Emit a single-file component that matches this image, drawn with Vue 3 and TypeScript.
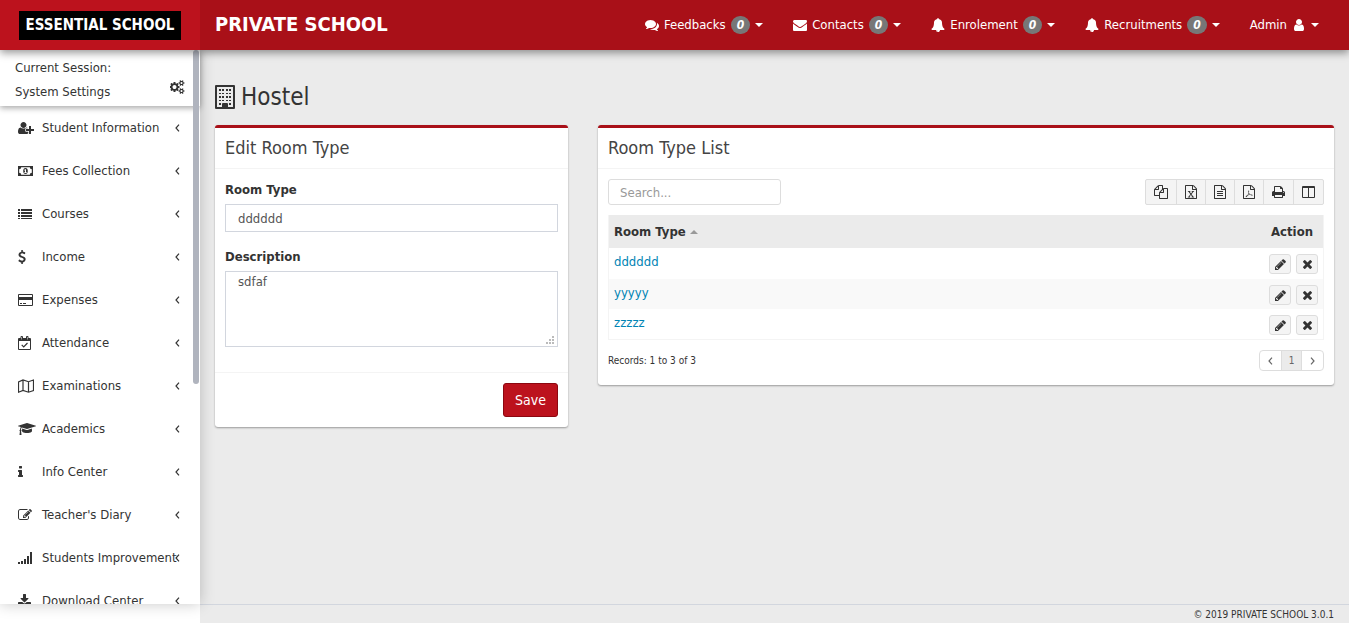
<script setup lang="ts">
import { ref } from 'vue'

interface Icon { box: string; w: number; h: number; d: string; line?: string }

const page = 'M1596 380q28 28 48 76t20 88v1152q0 40-28 68t-68 28h-1344q-40 0-68-28t-28-68v-1600q0-40 28-68t68-28h896q40 0 88 20t76 48zm-444-244v376h376q-10-29-22-41l-313-313q-12-12-41-22zm384 1528v-1024h-416q-40 0-68-28t-28-68v-416h-768v1536h1280z'

const icons: Record<string, Icon> = {
  comments: { box: '0 0 1792 1792', w: 14, h: 14, d: 'M1408 768q0 139-94 257t-256.500 186.500-353.500 68.500q-86 0-176-16-124 88-278 128-36 9-86 16h-3q-11 0-20.500-8t-11.500-21q-1-3-1-6.500t.5-6.500 2-6l2.500-5 3.500-5.500 4-5 4.500-5 4-4.500q5-6 23-25t26-29.500 22.500-29 25-38.500 20.500-44q-124-72-195-177t-71-224q0-139 94-257t256.500-186.500 353.500-68.500 353.500 68.500 256.500 186.500 94 257zm384 256q0 120-71 224.500t-195 176.500q10 24 20.500 44t25 38.500 22.500 29 26 29.500 23 25q1 1 4 4.500t4.500 5 4 5 3.500 5.500l2.500 5 2 6 .5 6.500-1 6.500q-3 14-13 22t-22 7q-50-7-86-16-154-40-278-128-90 16-176 16-271 0-472-132 58 4 88 4 161 0 309-45t264-129q125-92 192-212t67-254q0-77-23-152 129 71 204 178t75 230z' },
  envelope: { box: '0 0 1792 1792', w: 14, h: 14, d: 'M1792 710v794q0 66-47 113t-113 47h-1472q-66 0-113-47t-47-113v-794q44 49 101 87 362 246 497 345 57 42 92.500 65.500t94.500 48 110 24.500h2q51 0 110-24.500t94.500-48 92.500-65.500q170-123 498-345 57-39 100-87zm0-294q0 79-49 151t-122 123q-376 261-468 325-10 7-42.500 31t-54 38.500-52 32.500-57.500 27-50 9h-2q-23 0-50-9t-57.500-27-52-32.500-54-38.500-42.500-31q-91-64-262-182.500t-205-142.500q-62-42-117-115.500t-55-136.500q0-78 41.500-130t118.500-52h1472q65 0 112.500 47t47.500 113z' },
  bell: { box: '0 0 1792 1792', w: 14, h: 14, d: 'M912 1696q0-16-16-16-59 0-101.500-42.500t-42.500-101.500q0-16-16-16t-16 16q0 73 51.500 124.500t124.500 51.500q16 0 16-16zm816-288q0 52-38 90t-90 38h-448q0 106-75 181t-181 75-181-75-75-181h-448q-52 0-90-38t-38-90q50-42 91-88t85-119.500 74.500-158.500 50-206 19.500-260q0-152 117-282.500t307-158.500q-8-19-8-39 0-40 28-68t68-28 68 28 28 68q0 20-8 39 190 28 307 158.500t117 282.500q0 139 19.500 260t50 206 74.500 158.500 85 119.500 91 88z' },
  user: { box: '256 0 1280 1792', w: 10, h: 14, d: 'M1536 1399q0 109-62.500 187t-150.500 78h-854q-88 0-150.500-78t-62.500-187q0-85 8.500-160.500t31.500-152 58.500-131 94-89 134.500-34.500q131 128 313 128t313-128q76 0 134.500 34.500t94 89 58.500 131 31.500 152 8.500 160.500zm-256-887q0 159-112.500 271.500t-271.500 112.500-271.500-112.500-112.500-271.500 112.500-271.500 271.500-112.500 271.500 112.500 112.500 271.500z' },
  cogs: { box: '0 0 1920 1792', w: 15, h: 14, d: 'M832 896q0-106-75-181t-181-75-181 75-75 181 75 181 181 75 181-75 75-181zm768 512q0-52-38-90t-90-38-90 38-38 90q0 53 37.500 90.500t90.500 37.500 90.500-37.500 37.500-90.500zm0-1024q0-52-38-90t-90-38-90 38-38 90q0 53 37.500 90.500t90.500 37.500 90.500-37.500 37.500-90.500zm-384 421v185q0 10-7 19.500t-16 10.500l-155 24q-11 35-32 76 34 48 90 115 7 11 7 20 0 12-7 19-23 30-82.500 89.500t-78.500 59.500q-11 0-21-7l-115-90q-37 19-77 31-11 108-23 155-7 24-30 24h-186q-11 0-20-7.500t-10-17.500l-23-153q-34-10-75-31l-118 89q-7 7-20 7-11 0-21-8-144-133-144-160 0-9 7-19 10-14 41-53t47-61q-23-44-35-82l-152-24q-10-1-17-9.500t-7-19.500v-185q0-10 7-19.500t16-10.500l155-24q11-35 32-76-34-48-90-115-7-11-7-20 0-12 7-20 22-30 82-89t79-59q11 0 21 7l115 90q34-18 77-32 11-108 23-154 7-24 30-24h186q11 0 20 7.500t10 17.500l23 153q34 10 75 31l118-89q8-7 20-7 11 0 21 8 144 133 144 160 0 9-7 19-12 16-42 54t-45 60q23 48 34 82l152 23q10 2 17 10.500t7 19.500zm640 533v140q0 16-149 31-12 27-30 52 51 113 51 138 0 4-4 7-122 71-124 71-8 0-46-47t-52-68q-20 2-30 2t-30-2q-14 21-52 68t-46 47q-2 0-124-71-4-3-4-7 0-25 51-138-18-25-30-52-149-15-149-31v-140q0-16 149-31 13-29 30-52-51-113-51-138 0-4 4-7 4-2 35-20t59-34 30-16q8 0 46 46.500t52 67.500q20-2 30-2t30 2q51-71 92-112l6-2q4 0 124 70 4 3 4 7 0 25-51 138 17 23 30 52 149 15 149 31zm0-1024v140q0 16-149 31-12 27-30 52 51 113 51 138 0 4-4 7-122 71-124 71-8 0-46-47t-52-68q-20 2-30 2t-30-2q-14 21-52 68t-46 47q-2 0-124-71-4-3-4-7 0-25 51-138-18-25-30-52-149-15-149-31v-140q0-16 149-31 13-29 30-52-51-113-51-138 0-4 4-7 4-2 35-20t59-34 30-16q8 0 46 46.500t52 67.500q20-2 30-2t30 2q51-71 92-112l6-2q4 0 124 70 4 3 4 7 0 25-51 138 17 23 30 52 149 15 149 31z' },
  userPlus: { box: '0 0 2048 1792', w: 16, h: 14, d: 'M704 896q-159 0-271.500-112.500t-112.500-271.500 112.500-271.500 271.500-112.500 271.500 112.500 112.500 271.500-112.500 271.500-271.500 112.500zm960 128h352q13 0 22.500 9.500t9.500 22.500v192q0 13-9.500 22.500t-22.500 9.500h-352v352q0 13-9.500 22.500t-22.500 9.500h-192q-13 0-22.500-9.500t-9.500-22.500v-352h-352q-13 0-22.500-9.500t-9.500-22.500v-192q0-13 9.500-22.500t22.500-9.500h352v-352q0-13 9.500-22.500t22.500-9.500h192q13 0 22.500 9.500t9.500 22.500v352zm-736 224q0 52 38 90t90 38h256v238q-68 50-171 50h-874q-121 0-194-69t-73-190q0-53 3.500-103.500t14-109 26.500-108.500 43-97.500 62-81 85.500-53.500 111.500-20q19 0 39 17 79 61 154.500 91.500t164.500 30.500 164.500-30.500 154.500-91.500q20-17 39-17 132 0 217 96h-223q-52 0-90 38t-38 90v192z' },
  money: { box: '0 0 15 14', w: 15, h: 14, d: 'M0 2h15v10H0zM3.200 3.300a2 2 0 0 1-2 2v3.400a2 2 0 0 1 2 2h8.600a2 2 0 0 1 2-2V5.300a2 2 0 0 1-2-2zM7.500 4a2.300 3 0 1 1 0 6 2.300 3 0 1 1 0-6zM7 5.200l-.8.8v.6H7v1.600h-.8V9h2.600v-.8H8v-3z' },
  list: { box: '0 0 14 14', w: 14, h: 14, d: 'M0 2h2v2H0zM3 2h11v2H3zM0 5h2v2H0zM3 5h11v2H3zM0 8h2v2H0zM3 8h11v2H3zM0 11h2v1H0zM3 11h11v1H3z' },
  dollar: { box: '384 0 1024 1792', w: 8, h: 14, d: 'M1362 1185q0 153-99.500 263.500t-258.500 136.500v175q0 14-9 23t-23 9h-135q-13 0-22.500-9.500t-9.500-22.500v-175q-66-9-127.500-31t-101.500-44.500-74-48-46.500-37.500-17.500-18q-17-21-2-41l103-135q7-10 23-12 15-2 24 9l2 2q113 99 243 125 37 8 74 8 81 0 142.500-43t61.500-122q0-28-15-53t-33.500-42-58.500-37.500-66-32-80-32.500q-39-16-61.500-25t-61.500-26.500-62.500-31-56.500-35.500-53.500-42.500-43.500-49-35.500-58-21-66.500-8.500-78q0-138 98-242t255-134v-180q0-13 9.500-22.500t22.500-9.500h135q14 0 23 9t9 23v176q57 6 110.500 23t87 33.500 63.500 37.500 39 29 15 14q17 18 5 38l-81 146q-8 15-23 16-14 3-27-7-3-3-14.500-12t-39-26.500-58.500-32-74.500-26-85.500-11.500q-95 0-155 43t-60 111q0 26 8.500 48t29.500 41.500 39.500 33 56 31 60.500 27 70 27.500q53 20 81 31.500t76 35 75.500 42.500 62 50 53 63.500 31.500 76.500 13 94z' },
  card: { box: '0 0 15 14', w: 15, h: 14, d: 'M1 1h13q1 0 1 1v10q0 1-1 1H1q-1 0-1-1V2q0-1 1-1zM1 2v2h13V2zM1 7v5h13V7zM2 10h2v1H2zM5 10h3v1H5z' },
  calendar: { box: '0 0 13 14', w: 13, h: 14, d: 'M1 2h1.500V1q0-1 1-1h.500q1 0 1 1v1h3V1q0-1 1-1h.500q1 0 1 1v1H12q1 0 1 1v10q0 1-1 1H1q-1 0-1-1V3q0-1 1-1zM1 5v8h11V5zM3.500 1v2.500h.500V1zM9 1v2.500h.500V1z', line: 'M3.700 8.800l2 2L9.500 7' },
  map: { box: '0 0 16 14', w: 16, h: 14, d: '', line: 'M.5 3v10.200L5 11.500l5.500 1.700 5-1.700V1l-5 1.700L5 1zM5 1v10.500M10.500 2.700v10.500' },
  cap: { box: '0 0 2304 1792', w: 18, h: 14, d: 'M1774 836l18 316q4 69-82 128t-235 93.500-323 34.500-323-34.500-235-93.500-82-128l18-316 574 181q22 7 48 7t48-7zm530-324q0 23-22 31l-1120 352q-4 1-10 1t-10-1l-652-206q-43 34-71 111.500t-34 178.500q63 36 63 109 0 69-58 107l58 433q2 14-8 25-9 11-24 11h-192q-15 0-24-11-10-11-8-25l58-433q-58-38-58-107 0-73 65-111 11-207 98-330l-333-104q-22-8-22-31t22-31l1120-352q4-1 10-1t10 1l1120 352q22 8 22 31z' },
  info: { box: '576 0 640 1792', w: 5, h: 14, d: 'M1216 1344v128q0 26-19 45t-45 19h-512q-26 0-45-19t-19-45v-128q0-26 19-45t45-19h64v-384h-64q-26 0-45-19t-19-45v-128q0-26 19-45t45-19h384q26 0 45 19t19 45v576h64q26 0 45 19t19 45zm-128-1152v192q0 26-19 45t-45 19h-256q-26 0-45-19t-19-45v-192q0-26 19-45t45-19h256q26 0 45 19t19 45z' },
  compose: { box: '0 0 1792 1792', w: 14, h: 14, d: 'M888 1184l116-116-152-152-116 116v56h96v96h56zm440-720q-16-16-33 1l-350 350q-17 17-1 33t33-1l350-350q17-17 1-33zm80 594v190q0 119-84.500 203.500t-203.500 84.500h-832q-119 0-203.500-84.500t-84.500-203.500v-832q0-119 84.500-203.500t203.500-84.500h832q63 0 117 25 15 7 18 23 3 17-9 29l-49 49q-14 14-32 8-23-6-45-6h-832q-66 0-113 47t-47 113v832q0 66 47 113t113 47h832q66 0 113-47t47-113v-126q0-13 9-22l64-64q15-15 35-7t20 29zm-96-738l288 288-672 672h-288v-288zm444 132l-92 92-288-288 92-92q28-28 68-28t68 28l152 152q28 28 28 68t-28 68z' },
  signal: { box: '0 0 14 14', w: 14, h: 14, d: 'M0 11h2v2H0zM3 10h2v3H3zM6 8h2v5H6zM9 5h2v8H9zM12 1h2v12h-2z' },
  download: { box: '64 0 1664 1792', w: 13, h: 14, d: 'M1344 1344q0-26-19-45t-45-19-45 19-19 45 19 45 45 19 45-19 19-45zm256 0q0-26-19-45t-45-19-45 19-19 45 19 45 45 19 45-19 19-45zm128-224v320q0 40-28 68t-68 28h-1472q-40 0-68-28t-28-68v-320q0-40 28-68t68-28h465l135 136q58 56 136 56t136-56l136-136h464q40 0 68 28t28 68zm-325-569q17 41-14 70l-448 448q-18 19-45 19t-45-19l-448-448q-31-29-14-70 17-39 59-39h256v-448q0-26 19-45t45-19h256q26 0 45 19t19 45v448h256q42 0 59 39z' },
  building: { box: '0 0 20 24', w: 20, h: 24, d: 'M1 0h18q1 0 1 1v22q0 1-1 1H1q-1 0-1-1V1q0-1 1-1zM2 2v20h5v-3q0-1 1-1h4q1 0 1 1v3h5V2zM4 4h2v2H4zM7 4h2v2H7zM11 4h2v2h-2zM14 4h2v2h-2zM4 8h2v1H4zM7 8h2v1H7zM11 8h2v1h-2zM14 8h2v1h-2zM4 11h2v2H4zM7 11h2v2H7zM11 11h2v2h-2zM14 11h2v2h-2zM4 15h2v1H4zM7 15h2v1H7zM11 15h2v1h-2zM14 15h2v1h-2zM4 18h2v2H4zM14 18h2v2h-2z' },
  copy: { box: '0 0 1792 1792', w: 14, h: 14, d: 'M1696 384q40 0 68 28t28 68v1216q0 40-28 68t-68 28h-960q-40 0-68-28t-28-68v-288h-544q-40 0-68-28t-28-68v-672q0-40 20-88t48-76l408-408q28-28 76-48t88-20h416q40 0 68 28t28 68v328q68-40 128-40h416zm-544 213l-299 299h299v-299zm-640-384l-299 299h299v-299zm196 647l316-316v-416h-384v416q0 40-28 68t-68 28h-416v640h512v-256q0-40 20-88t48-76zm956 804v-1152h-384v416q0 40-28 68t-68 28h-416v640h896z' },
  excel: { box: '128 0 1536 1792', w: 12, h: 14, d: page + 'M500 768h320v110h-80l160 220 160-220h-80v-110h310v110h-90l-230 300 240 310h80v110H970v-110h70l-160-230-160 230h80v110H490v-110h80l240-310-230-300h-80z' },
  text: { box: '128 0 1536 1792', w: 12, h: 14, d: page + 'M512 768h768v128H512zM512 1024h768v128H512zM512 1280h768v128H512z' },
  pdf: { box: '128 0 1536 1792', w: 12, h: 14, d: page + 'M800 720q90-40 110 60 10 80-25 210 70 150 190 220 260-20 300 60 20 110-130 80-110-30-210-90-150 20-290 75-150 250-240 230-120-50 60-200 60-40 150-80 80-150 125-290-60-210-40-275zM875 1090q-35 90-75 165 90-30 175-45-60-50-100-120z' },
  print: { box: '64 0 1664 1792', w: 13, h: 14, d: 'M448 1536h896v-256h-896v256zm0-640h896v-384h-160q-40 0-68-28t-28-68v-160h-640v640zm1152 64q0-26-19-45t-45-19-45 19-19 45 19 45 45 19 45-19 19-45zm128 0v416q0 13-9.500 22.500t-22.500 9.500h-224v160q0 40-28 68t-68 28h-960q-40 0-68-28t-28-68v-160h-224q-13 0-22.500-9.500t-9.500-22.500v-416q0-79 56.500-135.500t135.500-56.500h64v-544q0-40 28-68t68-28h672q40 0 88 20t76 48l152 152q28 28 48 76t20 88v256h64q79 0 135.500 56.500t56.500 135.500z' },
  columns: { box: '0 0 13 14', w: 13, h: 14, d: 'M1 1h11q1 0 1 1v10q0 1-1 1H1q-1 0-1-1V2q0-1 1-1zM1 3v9h5V3zM7 3v9h5V3z' },
  pencil: { box: '128 128 1536 1536', w: 11, h: 11, d: 'M491 1536l91-91-235-235-91 91v107h128v128h107zm523-928q0-22-22-22-10 0-17 7l-542 542q-7 7-7 17 0 22 22 22 10 0 17-7l542-542q7-7 7-17zm-54-192l416 416-832 832h-416v-416zm683 96q0 53-37 90l-166 166-416-416 166-165q36-38 90-38 53 0 91 38l235 234q37 39 37 91z' },
  remove: { box: '302 366 1188 1188', w: 9, h: 9, d: 'M1490 1322q0 40-28 68l-136 136q-28 28-68 28t-68-28l-294-294-294 294q-28 28-68 28t-68-28l-136-136q-28-28-28-68t28-68l294-294-294-294q-28-28-28-68t28-68l136-136q28-28 68-28t68 28l294 294 294-294q28-28 68-28t68 28l136 136q28 28 28 68t-28 68l-294 294 294 294q28 28 28 68z' },
  left: { box: '0 0 5 8', w: 5, h: 8, d: '', line: 'M4 .7L1 4l3 3.300' },
  right: { box: '0 0 5 8', w: 5, h: 8, d: '', line: 'M1 .7L4 4 1 7.300' },
}

const notices = [
  { icon: 'comments', label: 'Feedbacks', count: 0 },
  { icon: 'envelope', label: 'Contacts', count: 0 },
  { icon: 'bell', label: 'Enrolement', count: 0 },
  { icon: 'bell', label: 'Recruitments', count: 0 },
]

const menu = [
  { icon: 'userPlus', label: 'Student Information' },
  { icon: 'money', label: 'Fees Collection' },
  { icon: 'list', label: 'Courses' },
  { icon: 'dollar', label: 'Income' },
  { icon: 'card', label: 'Expenses' },
  { icon: 'calendar', label: 'Attendance' },
  { icon: 'map', label: 'Examinations' },
  { icon: 'cap', label: 'Academics' },
  { icon: 'info', label: 'Info Center' },
  { icon: 'compose', label: "Teacher's Diary" },
  { icon: 'signal', label: 'Students Improvement' },
  { icon: 'download', label: 'Download Center' },
]

const tools = [
  { icon: 'copy', label: 'Copy' },
  { icon: 'excel', label: 'Excel' },
  { icon: 'text', label: 'CSV' },
  { icon: 'pdf', label: 'PDF' },
  { icon: 'print', label: 'Print' },
  { icon: 'columns', label: 'Columns' },
]

const rooms = ['dddddd', 'yyyyy', 'zzzzz']
const roomType = ref('dddddd')
const description = ref('sdfaf')
const search = ref('')
</script>

<template>
  <div class="app">
    <svg class="defs" aria-hidden="true">
      <symbol v-for="(icon, name) in icons" :id="'i-' + name" :key="name" :viewBox="icon.box">
        <path v-if="icon.d" :d="icon.d" fill="currentColor" fill-rule="evenodd" />
        <path v-if="icon.line" :d="icon.line" fill="none" stroke="currentColor" stroke-width="1.2" />
      </symbol>
    </svg>

    <header class="topbar">
      <a class="brand" href="#"><span class="logo">ESSENTIAL SCHOOL</span></a>
      <div class="bar">
        <span class="school">PRIVATE SCHOOL</span>
        <nav class="notices">
          <a v-for="n in notices" :key="n.label" class="notice" href="#">
            <svg :width="icons[n.icon].w" :height="icons[n.icon].h"><use :href="'#i-' + n.icon" /></svg>
            <span>{{ n.label }}</span>
            <em class="count">{{ n.count }}</em>
            <span class="caret"></span>
          </a>
          <a class="notice account" href="#">
            <span>Admin</span>
            <svg width="10" height="14"><use href="#i-user" /></svg>
            <span class="caret"></span>
          </a>
        </nav>
      </div>
    </header>

    <div class="layout">
      <aside class="sidebar">
        <div class="session">
          <div>Current Session:</div>
          <div class="settings">
            <a href="#">System Settings</a>
            <a href="#" aria-label="Settings"><svg width="15" height="14"><use href="#i-cogs" /></svg></a>
          </div>
        </div>
        <div class="menu-wrap">
          <ul class="menu">
            <li v-for="m in menu" :key="m.label">
              <a href="#">
                <span class="menu-icon"><svg :width="icons[m.icon].w" :height="icons[m.icon].h"><use :href="'#i-' + m.icon" /></svg></span>
                <span class="menu-label">{{ m.label }}</span>
                <svg width="5" height="8"><use href="#i-left" /></svg>
              </a>
            </li>
          </ul>
        </div>
        <div class="thumb"></div>
      </aside>

      <div class="main">
        <main class="content">
          <h1><svg width="20" height="24"><use href="#i-building" /></svg>Hostel</h1>
          <div class="columns">
            <div class="column">
              <form class="panel" @submit.prevent>
                <h2>Edit Room Type</h2>
                <div class="form-body">
                  <div class="field">
                    <label for="room-type">Room Type</label>
                    <input id="room-type" v-model="roomType" type="text" />
                  </div>
                  <div class="field">
                    <label for="description">Description</label>
                    <div class="area">
                      <textarea id="description" v-model="description"></textarea>
                      <svg class="grip" width="8" height="8" aria-hidden="true"><path d="M6 0h2v2H6zM3 3h2v2H3zM6 3h2v2H6zM0 6h2v2H0zM3 6h2v2H3zM6 6h2v2H6z" fill="#bbb" /></svg>
                    </div>
                  </div>
                </div>
                <div class="form-foot"><button class="save" type="submit">Save</button></div>
              </form>
            </div>

            <div class="column">
              <section class="panel">
                <h2>Room Type List</h2>
                <div class="list-body">
                  <div class="toolbar">
                    <input v-model="search" class="search" type="search" placeholder="Search..." aria-label="Search" />
                    <div class="tools">
                      <button v-for="t in tools" :key="t.label" type="button" :aria-label="t.label">
                        <svg :width="icons[t.icon].w" :height="icons[t.icon].h"><use :href="'#i-' + t.icon" /></svg>
                      </button>
                    </div>
                  </div>
                  <table>
                    <thead>
                      <tr><th>Room Type <span class="sort"></span></th><th class="right">Action</th></tr>
                    </thead>
                    <tbody>
                      <tr v-for="r in rooms" :key="r">
                        <td><a href="#">{{ r }}</a></td>
                        <td>
                          <div class="actions">
                            <button type="button" aria-label="Edit"><svg width="11" height="11"><use href="#i-pencil" /></svg></button>
                            <button type="button" aria-label="Delete"><svg width="9" height="9"><use href="#i-remove" /></svg></button>
                          </div>
                        </td>
                      </tr>
                    </tbody>
                  </table>
                  <div class="summary">
                    <span>Records: 1 to 3 of 3</span>
                    <div class="pager">
                      <button type="button" aria-label="Previous"><svg width="5" height="8"><use href="#i-left" /></svg></button>
                      <button type="button" class="current">1</button>
                      <button type="button" aria-label="Next"><svg width="5" height="8"><use href="#i-right" /></svg></button>
                    </div>
                  </div>
                </div>
              </section>
            </div>
          </div>
        </main>
        <footer>© 2019 PRIVATE SCHOOL 3.0.1</footer>
      </div>
    </div>
  </div>
</template>

<style>
body { margin: 0; background: #fff; }
</style>

<style scoped>
* { box-sizing: border-box; }
.app { height: 100vh; display: flex; flex-direction: column; overflow: hidden; font: 13px/20px "DejaVu Sans Condensed", "Noto Sans", sans-serif; color: #333; }
a { color: inherit; text-decoration: none; }
button, input, textarea { font: inherit; color: inherit; margin: 0; }
svg { display: block; flex: none; }
.defs { position: absolute; width: 0; height: 0; }

.topbar { display: flex; flex: none; height: 50px; background: #a91018; color: #fff; box-shadow: 0 3px 8px rgba(0, 0, 0, .4); position: relative; z-index: 3; }
.brand { width: 200px; flex: none; background: #bc121d; display: flex; align-items: center; justify-content: center; }
.logo { background: #000; width: 162px; height: 29px; line-height: 29px; text-align: center; font-size: 15px; font-weight: 700; white-space: nowrap; }
.bar { flex: 1; display: flex; justify-content: space-between; align-items: center; padding: 0 30px 0 15px; }
.school { font-size: 20px; font-weight: 700; line-height: 48px; align-self: flex-start; white-space: nowrap; }
.notices { display: flex; gap: 30px; }
.notice { display: flex; align-items: center; gap: 5px; white-space: nowrap; }
.account { gap: 7px; }
.count { background: #777; border-radius: 10px; height: 18px; padding: 0 6px; font-size: 12px; line-height: 18px; font-weight: 700; }
.caret { border: 4px solid transparent; border-top-color: #fff; border-bottom: 0; }

.layout { flex: 1; min-height: 0; display: flex; }
.sidebar { width: 200px; flex: none; margin-bottom: 19px; background: #fff; box-shadow: 0 0 14px rgba(0, 0, 0, .22); position: relative; z-index: 2; display: flex; flex-direction: column; }
.session { flex: none; height: 56px; padding: 6px 15px 2px; line-height: 24px; box-shadow: 0 2px 6px rgba(0, 0, 0, .35); position: relative; }
.settings { display: flex; justify-content: space-between; }
.menu-wrap { flex: 1; min-height: 0; overflow: hidden; }
.menu { list-style: none; margin: 0; padding: 0; }
.menu a { display: flex; align-items: center; height: 43px; padding: 0 20px 0 18px; }
.menu-icon { width: 24px; flex: none; }
.menu-label { flex: 1; min-width: 0; white-space: nowrap; }
.thumb { position: absolute; top: 0; right: 1px; width: 6px; height: 334px; border-radius: 4px; background: #b0b4be; }

.main { flex: 1; min-width: 0; background: #ebebeb; display: flex; flex-direction: column; }
.content { flex: 1; }
h1 { display: flex; align-items: center; gap: 6px; margin: 0; padding: 30px 15px 11px; font-size: 24px; line-height: 34px; font-weight: 400; }
.columns { display: grid; grid-template-columns: 1fr 2fr; align-items: start; }
.column { padding: 0 15px; min-width: 0; }
.panel { background: #fff; border-top: 3px solid #a91018; border-radius: 3px; box-shadow: 0 1px 2px rgba(0, 0, 0, .35); }
h2 { margin: 0; padding: 8px 10px; border-bottom: 1px solid #f4f4f4; font-size: 18px; line-height: 24px; font-weight: 400; color: #444; }
.form-body { padding: 11px 10px 10px; }
.field { display: flex; flex-direction: column; gap: 4px; margin-bottom: 15px; }
.field label { font-weight: 700; }
.field input { width: 100%; height: 28px; border: 1px solid #d2d6de; padding: 0 12px; color: #555; }
.area { position: relative; height: 76px; }
textarea { display: block; width: 100%; height: 100%; border: 1px solid #d2d6de; padding: 0 12px; color: #555; resize: none; }
.grip { position: absolute; right: 4px; bottom: 3px; }
.form-foot { display: flex; justify-content: flex-end; border-top: 1px solid #f4f4f4; padding: 10px; }
.save { height: 34px; padding: 0 11px; border: 1px solid #8c0710; border-radius: 3px; background: #bc121d; color: #fff; font-size: 14px; }

.list-body { padding: 10px 10px 14px; }
.toolbar { display: flex; justify-content: space-between; margin-bottom: 10px; }
.search { width: 173px; height: 26px; border: 1px solid #ddd; border-radius: 3px; padding: 0 11px; appearance: none; background: #fff; }
.search::placeholder { color: #999; opacity: 1; }
.tools { display: flex; border: 1px solid #ddd; border-radius: 2px; background: #f4f4f4; }
.tools button { display: flex; align-items: center; height: 24px; padding: 0 8px; border: 0; border-left: 1px solid #ddd; background: none; color: #333; }
.tools button:first-child { border-left: 0; }
table { width: 100%; border-collapse: separate; border-spacing: 0; border: 1px solid #f4f4f4; border-top: 0; }
th { height: 33px; padding: 0 5px; background: #ebebeb; text-align: left; font-weight: 700; }
th.right { text-align: right; padding-right: 10px; }
.sort { display: inline-block; vertical-align: middle; border: 4px solid transparent; border-bottom-color: #999; border-top: 0; }
td { height: 30px; padding: 4px 5px 0; vertical-align: top; color: #0084b4; }
tbody tr:first-child td { height: 31px; }
tbody tr:nth-child(even) td { background: #f9f9f9; }
.actions { display: flex; justify-content: flex-end; gap: 5px; padding-top: 2px; }
.actions button { display: flex; align-items: center; justify-content: center; width: 22px; height: 20px; padding: 0; border: 1px solid #ddd; border-radius: 3px; background: #f4f4f4; color: #333; }
.summary { display: flex; justify-content: space-between; align-items: center; padding-top: 10px; font-size: 10px; }
.pager { display: flex; border: 1px solid #ddd; border-radius: 4px; color: #666; }
.pager button { display: flex; align-items: center; justify-content: center; width: 21px; height: 19px; padding: 0; border: 0; background: none; }
.pager .current { background: #ebebeb; border: solid #ddd; border-width: 0 1px; }
footer { flex: none; height: 19px; border-top: 1px solid #d2d6de; padding: 0 15px; text-align: right; font-size: 10px; line-height: 20px; }
</style>
